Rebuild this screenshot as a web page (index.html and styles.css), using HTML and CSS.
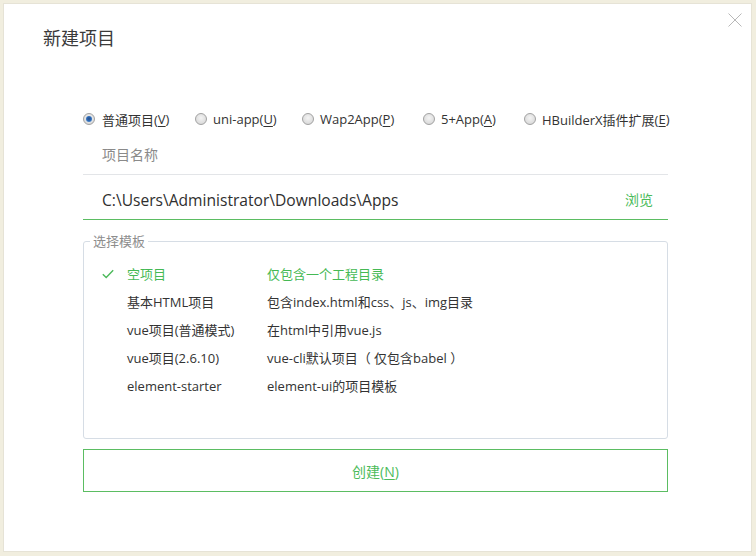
FILE: index.html
```html
<!DOCTYPE html>
<html lang="zh-CN">
<head>
<meta charset="utf-8">
<title>新建项目</title>
<link rel="stylesheet" href="styles.css">
</head>
<body>
<div class="dialog">
  <div class="title">新建项目</div>
  <button class="close" aria-label="关闭">
    <svg width="14" height="14" viewBox="0 0 14 14"><path d="M0.5 0.5L13.5 13.5M13.5 0.5L0.5 13.5" stroke="#b8b8b8" stroke-width="1" fill="none"/></svg>
  </button>
  <div class="content">
    <div class="radios">
      <label class="radio"><span class="dot checked"></span>普通项目(<u>V</u>)</label>
      <label class="radio"><span class="dot"></span>uni-app(<u>U</u>)</label>
      <label class="radio"><span class="dot"></span>Wap2App(<u>P</u>)</label>
      <label class="radio"><span class="dot"></span>5+App(<u>A</u>)</label>
      <label class="radio"><span class="dot"></span>HBuilderX插件扩展(<u>E</u>)</label>
    </div>
    <div class="field name">项目名称</div>
    <div class="field path">
      <span>C:\Users\Administrator\Downloads\Apps</span>
      <span class="browse">浏览</span>
    </div>
    <div class="templates">
      <span class="legend">选择模板</span>
      <div class="row selected">
        <span class="check"><svg width="12" height="10" viewBox="0 0 12 10"><path d="M0.8 5.2L4.2 8.4L11.2 1.2" stroke="#4cb95a" stroke-width="1.4" fill="none"/></svg></span>
        <span class="c1">空项目</span><span class="c2">仅包含一个工程目录</span>
      </div>
      <div class="row"><span class="check"></span><span class="c1">基本HTML项目</span><span class="c2">包含index.html和css、js、img目录</span></div>
      <div class="row"><span class="check"></span><span class="c1">vue项目(普通模式)</span><span class="c2">在html中引用vue.js</span></div>
      <div class="row"><span class="check"></span><span class="c1">vue项目(2.6.10)</span><span class="c2">vue-cli默认项目（ 仅包含babel ）</span></div>
      <div class="row"><span class="check"></span><span class="c1">element-starter</span><span class="c2">element-ui的项目模板</span></div>
    </div>
    <button class="create">创建(<u>N</u>)</button>
  </div>
</div>
</body>
</html>
```

FILE: styles.css
```css
* { box-sizing: border-box; }
html, body { margin: 0; padding: 0; }
body {
  width: 756px;
  height: 556px;
  background: #f1eedf;
  font-family: "Open Sans", "Noto Sans CJK SC", sans-serif;
  color: #333;
  padding: 3px 4px 4px 3px;
}
.dialog {
  position: relative;
  width: 749px;
  height: 549px;
  background: #fff;
  border: 1px solid #e6e3d6;
  padding: 21px 0 0 39px;
}
.title {
  font-size: 18px;
  line-height: 26px;
  color: #3a3a3a;
}
.close {
  position: absolute;
  top: 9px;
  right: 9px;
  width: 14px;
  height: 14px;
  padding: 0;
  border: 0;
  background: none;
  display: block;
}
.close svg { display: block; }
.content {
  width: 585px;
  margin-left: 40px;
  padding-top: 56px;
}
.radios {
  display: flex;
  height: 24px;
  align-items: center;
  font-size: 13px;
}
.radio {
  display: flex;
  flex: none;
  align-items: center;
  white-space: nowrap;
}
.radio:nth-child(1) { width: 112px; }
.radio:nth-child(2) { width: 107px; }
.radio:nth-child(3) { width: 121px; }
.radio:nth-child(4) { width: 101px; }
.radio u { text-underline-offset: 2px; }
.dot {
  width: 12px;
  height: 12px;
  border-radius: 50%;
  border: 1px solid #a2a2a2;
  background: radial-gradient(circle at 50% 40%, #f4f4f4 0, #dcdcdc 70%, #c9c9c9 100%);
  margin-right: 7px;
  flex: none;
  position: relative;
}
.radio:nth-child(n+2) .dot { margin-right: 6px; }
.dot.checked::after {
  content: "";
  position: absolute;
  left: 2px;
  top: 2px;
  width: 6px;
  height: 6px;
  border-radius: 50%;
  background: radial-gradient(circle at 50% 45%, #2a4f86 0, #2a66b4 45%, #6aa6e0 100%);
}
.field {
  padding-left: 19px;
  font-size: 14px;
}
.name {
  margin-top: 3px;
  height: 41px;
  padding-top: 1px;
  line-height: 40px;
  border-bottom: 1px solid #e3e5e8;
  color: #8a8a8a;
}
.path {
  height: 45px;
  padding-top: 6px;
  line-height: 38px;
  font-size: 15.6px;
  border-bottom: 1px solid #5bbd62;
  display: flex;
  justify-content: space-between;
  padding-right: 15px;
  color: #2f2f2f;
}
.browse {
  color: #4cbb5a;
  font-size: 14px;
}
.templates {
  position: relative;
  margin-top: 21px;
  height: 198px;
  border: 1px solid #d6dde5;
  border-radius: 3px;
  padding: 18px 0 0 18px;
  font-size: 13px;
}
.legend {
  position: absolute;
  top: -9px;
  left: 6px;
  padding: 0 3px;
  background: #fff;
  line-height: 16px;
  font-size: 13px;
  color: #8d8d8d;
}
.row {
  display: flex;
  height: 28px;
  line-height: 28px;
  align-items: center;
}
.check {
  width: 25px;
  display: flex;
  align-items: center;
}
.check svg { display: block; }
.c1 { width: 140px; }
.selected { color: #45b954; }
.create {
  display: block;
  width: 585px;
  height: 43px;
  margin-top: 10px;
  border: 1px solid #5bbd62;
  background: #fff;
  color: #4cbb5a;
  font-family: inherit;
  font-size: 14px;
  padding: 0;
}
.create u { text-underline-offset: 2px; }
```
